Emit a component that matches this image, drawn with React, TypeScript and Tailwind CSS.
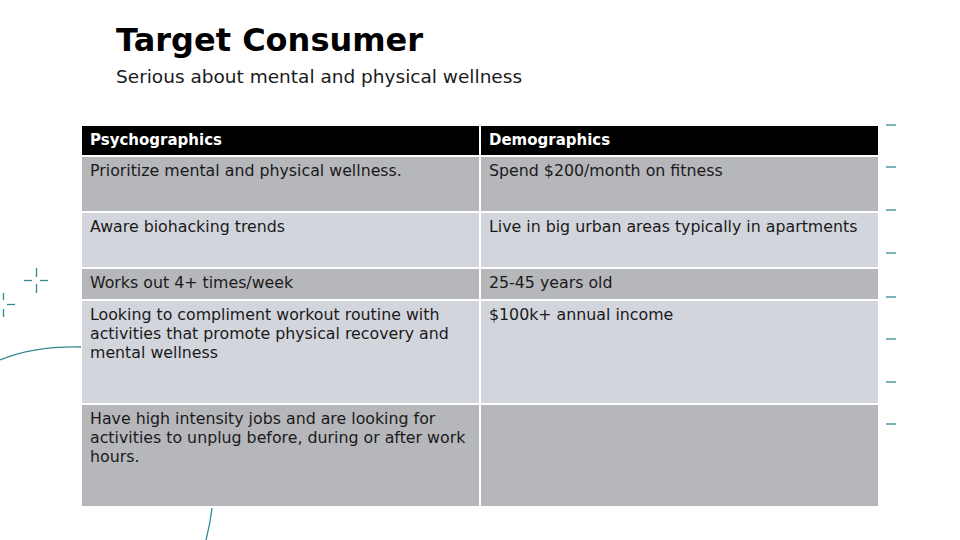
const rows = [
  {
    left: "Prioritize mental and physical wellness.",
    right: "Spend $200/month on fitness",
    h: "h-[54px]",
    bg: "bg-[#b6b7bb]",
  },
  {
    left: "Aware biohacking trends",
    right: "Live in big urban areas typically in apartments",
    h: "h-[54px]",
    bg: "bg-[#d3d5dd]",
  },
  {
    left: "Works out 4+ times/week",
    right: "25-45 years old",
    h: "h-[30px]",
    bg: "bg-[#b6b7bb]",
  },
  {
    left: "Looking to compliment workout routine with activities that promote physical recovery and mental wellness",
    right: "$100k+ annual income",
    h: "h-[102px]",
    bg: "bg-[#d3d5dd]",
  },
  {
    left: "Have high intensity jobs and are looking for activities to unplug before, during or after work hours.",
    right: "",
    h: "h-[101px]",
    bg: "bg-[#b6b7bb]",
  },
];

const dashYs = [125, 167, 210, 253, 297, 339, 382, 424];

function Decorations() {
  return (
    <svg
      className="absolute inset-0 pointer-events-none"
      width="960"
      height="540"
      viewBox="0 0 960 540"
      fill="none"
      stroke="#2f8b8e"
      strokeWidth="1.3"
    >
      {dashYs.map((y) => (
        <line key={y} x1="886" y1={y} x2="896" y2={y} />
      ))}
      {/* crosshair */}
      <line x1="36.5" y1="268" x2="36.5" y2="277" />
      <line x1="36.5" y1="284" x2="36.5" y2="293" />
      <line x1="24" y1="280.5" x2="32" y2="280.5" />
      <line x1="40" y1="280.5" x2="48" y2="280.5" />
      {/* partial crosshair */}
      <line x1="3.5" y1="293" x2="3.5" y2="300" />
      <line x1="3.5" y1="309" x2="3.5" y2="317" />
      <line x1="7" y1="304.5" x2="15" y2="304.5" />
      {/* arcs */}
      <path d="M0 360 Q 34 346 81 347" />
      <path d="M212 508 Q 210 525 206 540" />
    </svg>
  );
}

export default function App() {
  return (
    <div
      className="relative w-[960px] h-[540px] overflow-hidden bg-white text-[#1a1a1a]"
      style={{ fontFamily: '"DejaVu Sans", sans-serif' }}
    >
      <Decorations />

      <div className="pl-[116px] pt-[20px]">
        <h1 className="text-[32px] leading-[40px] font-bold text-black">Target Consumer</h1>
        <p className="mt-[5px] text-[18.5px] leading-[24px] text-[#1a1a1a]">
          Serious about mental and physical wellness
        </p>
      </div>

      <div className="ml-[82px] mt-[37px] w-[796px] grid grid-cols-2 gap-[2px]">
        <div className="h-[29px] bg-black text-white font-bold text-[15px] flex items-center pl-[8px]">
          Psychographics
        </div>
        <div className="h-[29px] bg-black text-white font-bold text-[15px] flex items-center pl-[8px]">
          Demographics
        </div>
        {rows.map((r, i) => (
          <div key={i} className="contents">
            <div className={`${r.h} ${r.bg} pl-[8px] pr-[4px] pt-[4px] text-[15.8px] leading-[19px]`}>
              {r.left}
            </div>
            <div className={`${r.h} ${r.bg} pl-[8px] pr-[4px] pt-[4px] text-[15.8px] leading-[19px]`}>
              {r.right}
            </div>
          </div>
        ))}
      </div>
    </div>
  );
}
